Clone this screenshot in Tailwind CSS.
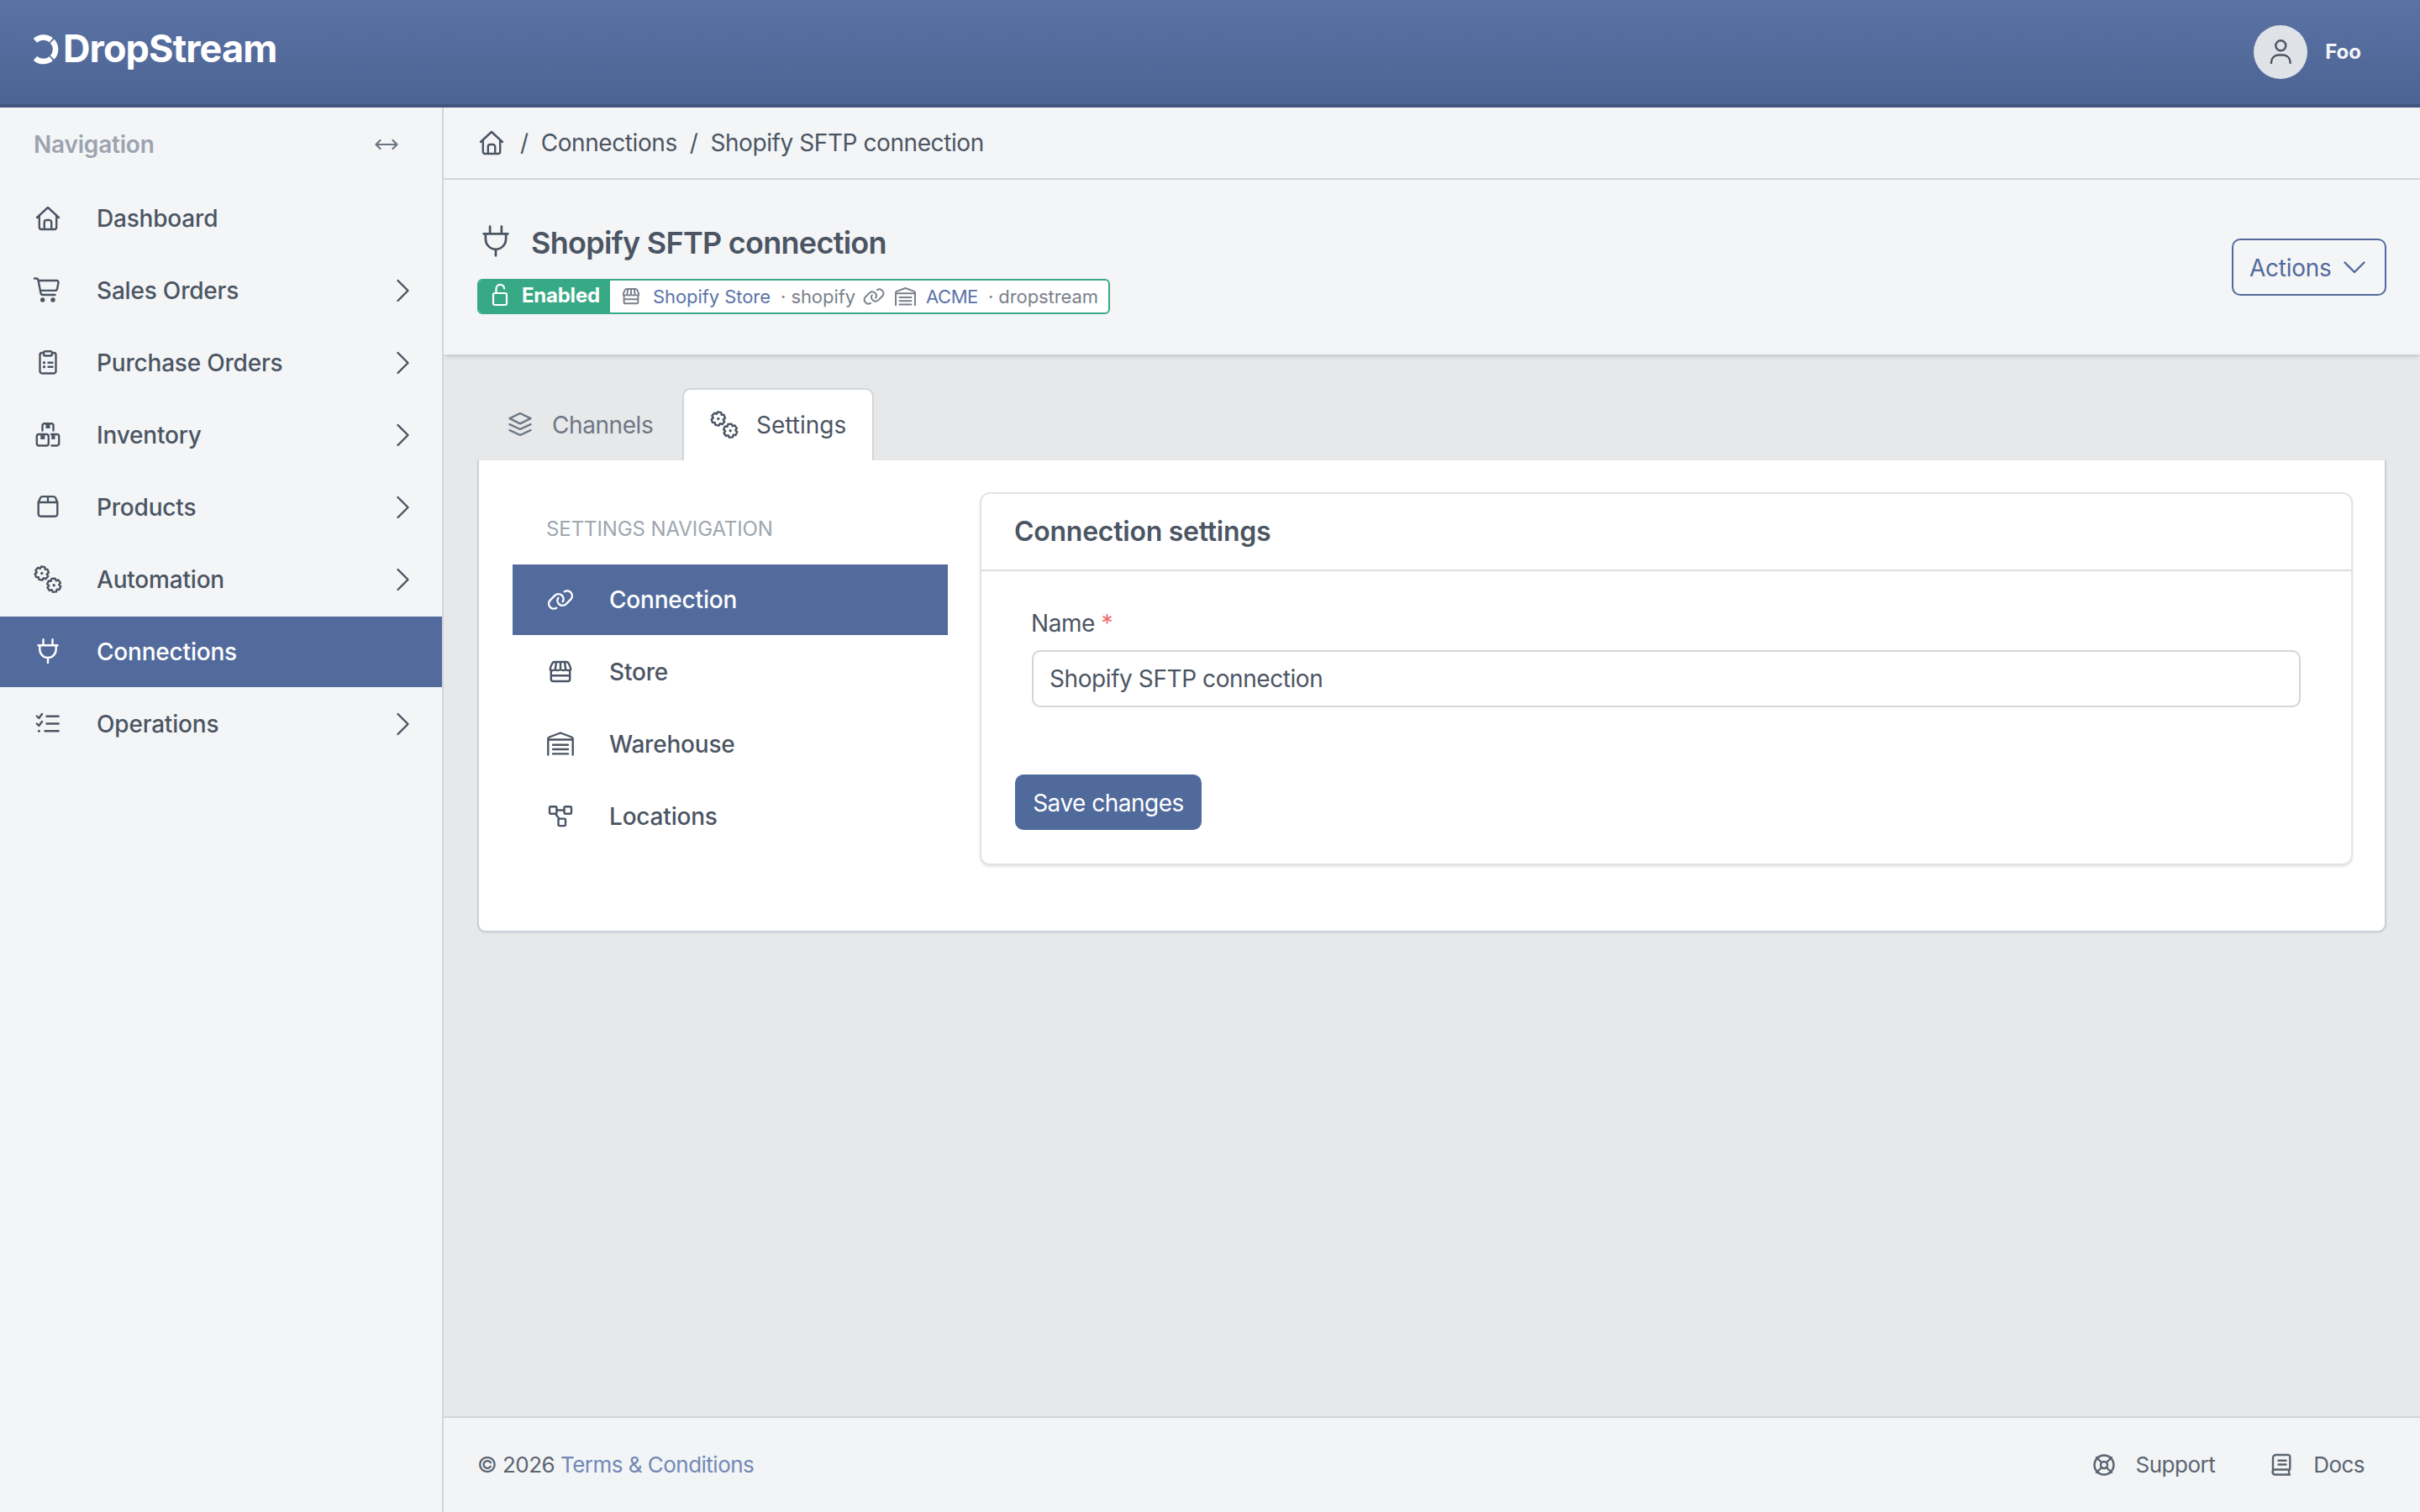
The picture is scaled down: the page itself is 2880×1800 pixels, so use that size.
<!DOCTYPE html>
<html lang="en">
  <head>
    <meta charset="UTF-8" />
    <meta name="viewport" content="width=device-width, initial-scale=1.0" />
    <title>Shopify SFTP connection | DropStream</title>
    <script src="https://cdn.jsdelivr.net/npm/@tailwindcss/browser@4"></script>
  </head>
  <body class="flex h-screen flex-col overflow-hidden bg-[#e6e8ea] font-['Inter','Liberation_Sans',sans-serif] text-[28px] leading-[42px] tracking-[-0.015em] text-[#4b5563] [stroke-linecap:round] [stroke-linejoin:round]">
    <!-- icon sprite -->
    <svg class="hidden">
      <symbol id="home" viewBox="0 0 32 32">
        <path d="M3 15 16 3l13 12M5.8 13v13.5a2.5 2.5 0 0 0 2.5 2.5h15.4a2.5 2.5 0 0 0 2.5-2.5V13" />
        <path d="M11.8 28.5v-8a2.5 2.5 0 0 1 2.5-2.5h3.4a2.5 2.5 0 0 1 2.5 2.5v8" />
      </symbol>
      <symbol id="cart" viewBox="0 0 32 32" overflow="visible">
        <path d="M0 1.5h2a2.5 2.5 0 0 1 2.5 2l3 15.5a2.5 2.5 0 0 0 2.5 2h14.5M4.5 4h22a2 2 0 0 1 2 2.4l-1.5 7.5a2.5 2.5 0 0 1-2.5 2H6.8" />
        <path d="M9.7 27h.01M22 27h.01" stroke-width="5.4" />
      </symbol>
      <symbol id="clipboard" viewBox="0 0 32 32">
        <path d="M10.5 4H9a2.5 2.5 0 0 0-2.5 2.5V26a2.5 2.5 0 0 0 2.5 2.5h14a2.5 2.5 0 0 0 2.5-2.5V6.5A2.5 2.5 0 0 0 23 4h-1.5" />
        <path d="M13 2.2h6a2 2 0 0 1 2 2v1.3a2 2 0 0 1-2 2h-6a2 2 0 0 1-2-2V4.2a2 2 0 0 1 2-2ZM16.5 15.7h5M16.5 20.7h5" />
        <path d="M11.5 15.7h.01M11.5 20.7h.01" stroke-width="3.4" />
      </symbol>
      <symbol id="boxes" viewBox="0 0 32 32">
        <path d="M9.500 10.500V4.500a2.300 2.300 0 0 1 2.300-2.300h8.400a2.300 2.300 0 0 1 2.300 2.300v6" />
        <rect x="2.8" y="15" width="14" height="13.5" rx="2.5" />
        <path d="M20 15h6.700a2.500 2.500 0 0 1 2.500 2.500V26a2.500 2.500 0 0 1-2.500 2.500H20.500" />
        <path d="M13.500 2h5v6h-5zM7.300 15h5v6h-5zM20.300 15h4.200v6h-4.200z" fill="currentColor" stroke="none" />
      </symbol>
      <symbol id="box" viewBox="0 0 32 32">
        <path d="M4.700 9.800 7 4.800a3 3 0 0 1 2.700-1.700h12.600A3 3 0 0 1 25 4.800l2.300 5V24a2.700 2.700 0 0 1-2.700 2.700H7.400A2.700 2.700 0 0 1 4.700 24ZM4.700 10h22.600M16 3.200V10" />
      </symbol>
      <symbol id="gears" viewBox="0 0 32 32" overflow="visible">
        <g transform="translate(8.8 8.5) rotate(-20)">
          <path d="M7.900-2.100V2.100L5.200 3 5.800 5.800 2.100 7.900 0 6-2.100 7.900-5.800 5.800-5.200 3-7.900 2.100V-2.100L-5.200-3-5.800-5.800-2.100-7.900 0-6 2.100-7.900 5.800-5.800 5.200-3Z" />
          <path d="M0 0h.01" stroke-width="3.4" />
        </g>
        <g transform="translate(23.2 22.7) rotate(25)">
          <path d="M7.900-2.100V2.100L5.200 3 5.800 5.800 2.100 7.900 0 6-2.100 7.900-5.800 5.800-5.200 3-7.900 2.100V-2.100L-5.200-3-5.800-5.800-2.100-7.900 0-6 2.100-7.900 5.800-5.800 5.200-3Z" />
          <path d="M0 0h.01" stroke-width="3.4" />
        </g>
      </symbol>
      <symbol id="plug" viewBox="0 0 32 32">
        <path d="M10.500 1.200V8M21.500 1.200V8M4.500 8.200h23M6.300 8.200V13a9.700 10 0 0 0 19.400 0V8.200M16 23v6" />
      </symbol>
      <symbol id="tasks" viewBox="0 0 32 32">
        <path d="m2.800 6.500 2.500 2.500 3.700-5M2.800 15.500 5.300 18l3.700-5M14.500 6.700h14.200M14.500 15.500h14.200M12.500 24.300h16.200" />
        <path d="M5.400 24.300h.01" stroke-width="3" />
      </symbol>
      <symbol id="chevron-right" viewBox="0 0 32 32">
        <path d="m11.500 4 12 12-12 12" />
      </symbol>
      <symbol id="chevron-down" viewBox="0 0 32 32">
        <path d="m4.500 10.500 11.500 11.500 11.500-11.500" />
      </symbol>
      <symbol id="arrows-h" viewBox="0 0 32 32">
        <path d="M3.500 16h25M8.500 11l-5 5 5 5M23.500 11l5 5-5 5" />
      </symbol>
      <symbol id="store" viewBox="0 0 32 32">
        <path d="M9 4h14a3 3 0 0 1 2.700 1.700c1.300 2.600 2.600 4.900 2.600 7.300-1.300 1.500-4.700 1.500-6.100 0-1.400 1.500-4.700 1.500-6.200 0-1.500 1.500-4.800 1.500-6.200 0-1.400 1.500-4.800 1.500-6.100 0 0-2.400 1.300-4.700 2.600-7.300A3 3 0 0 1 9 4ZM11 4l-1.200 9M16 4v9M21 4l1.200 9" />
        <path d="M4.800 14v10.500A2.500 2.500 0 0 0 7.300 27h17.400a2.500 2.500 0 0 0 2.500-2.500V14M4.800 20.200h22.400" />
      </symbol>
      <symbol id="warehouse" viewBox="0 0 32 32">
        <path d="M1.300 28.500V9.500q0-1.500 1.300-2L16 2.500l13.400 5q1.300.5 1.300 2v19M1.500 10.500h29M7 16.700h18M7 22h18M7 27.400h18" />
      </symbol>
      <symbol id="link" viewBox="0 0 32 32">
        <path d="M20.800 6.300A6 6 0 0 1 28.400 15.400L22.400 21.400A6 6 0 0 1 13.300 13.800M11.200 25.700A6 6 0 0 1 3.600 16.600L9.600 10.600A6 6 0 0 1 18.700 18.200" />
      </symbol>
      <symbol id="nodes" viewBox="0 0 32 32">
        <rect x="3" y="4.2" width="8.5" height="8.5" rx="1.5" />
        <rect x="20.500" y="4.200" width="8.500" height="8.500" rx="1.500" />
        <rect x="13.500" y="18.600" width="8.500" height="8.500" rx="1.500" />
        <path d="M11.500 8.500h9M10 12.700l4.500 6" />
      </symbol>
      <symbol id="layers" viewBox="0 0 32 32">
        <path d="m16 3 12.500 6.200L16 15.300 3.500 9.200ZM3.500 16.200 16 22l12.500-5.800M3.500 23.200 16 29l12.500-5.800" />
      </symbol>
      <symbol id="user" viewBox="0 0 32 32">
        <circle cx="16.3" cy="8.3" r="6" />
        <path d="M5 29v-1a8.500 8.500 0 0 1 8.500-8.500h5.600a8.500 8.500 0 0 1 8.500 8.500v1" />
      </symbol>
      <symbol id="unlock" viewBox="0 0 20 28">
        <rect x="2" y="12" width="16" height="14" rx="2" />
        <path d="M5.500 12V7a4.800 4.800 0 0 1 9.600-.5" />
      </symbol>
      <symbol id="life-ring" viewBox="0 0 32 32">
        <circle cx="16" cy="16" r="11.5" />
        <circle cx="16" cy="16" r="4" />
        <path d="m7 7 6 6M25 7l-6 6M7 25l6-6M25 25l-6-6" />
      </symbol>
      <symbol id="book" viewBox="0 0 32 32">
        <path d="M26 21.500H8.500a3 3 0 0 0 0 6h17.500M6 25V7.500a3.500 3.500 0 0 1 3.500-3.500H24a2.300 2.300 0 0 1 2.300 2.300v13.500a2.300 2.300 0 0 1-1.300 2.200v5.500M12.500 10.700h9M12.500 15.500h9" />
      </symbol>
    </svg>

    <!-- header -->
    <header class="flex h-32 shrink-0 items-center justify-between border-b-4 border-[#40557f] bg-linear-to-b from-[#5b73a4] to-[#4c6494] pr-[70px] pl-10 text-white">
      <a class="flex items-center gap-[5px]">
        <svg class="-mt-[7px] h-9 w-[30px] fill-none stroke-white stroke-[6.500] [stroke-linecap:butt]" viewBox="0 0 30 36">
          <path d="M2 7.300A14.300 14.300 0 0 1 20.900 6.800M22.200 8A14.300 14.300 0 0 1 22.200 27.600M20.900 28.800A14.300 14.300 0 0 1 2 28.300" />
        </svg>
        <span class="-mt-2 text-[45px] font-bold tracking-[-0.02em]">DropStream</span>
      </a>
      <div class="flex items-center gap-[21px]">
        <span class="flex size-16 items-center justify-center rounded-full bg-[#dfe2e7] text-[#4b5563]">
          <svg class="size-8 fill-none stroke-current stroke-[2.4]"><use href="#user" /></svg>
        </span>
        <span class="text-[24px] font-bold tracking-normal text-[#f4f5f7]">Foo</span>
      </div>
    </header>

    <div class="flex min-h-0 flex-1">
      <!-- sidebar -->
      <aside class="w-[528px] shrink-0 border-r-2 border-[#d1d5db] bg-[#f4f5f7] font-medium tracking-[-0.007em]">
        <div class="flex h-[90px] items-center justify-between pr-[50px] pb-0.5 pl-10 font-semibold text-[#9ca3af]">
          <span>Navigation</span>
          <svg class="size-8 fill-none stroke-[#6b7280] stroke-[2.2]"><use href="#arrows-h" /></svg>
        </div>
        <nav class="flex flex-col gap-0.5">
          <a class="flex h-[84px] items-center pr-8 pl-[41px]">
            <svg class="size-8 fill-none stroke-current stroke-[2.4]"><use href="#home" /></svg>
            <span class="ml-[42px] flex-1">Dashboard</span>
          </a>
          <a class="flex h-[84px] items-center pr-8 pl-[41px]">
            <svg class="size-8 overflow-visible fill-none stroke-current stroke-[2.4]"><use href="#cart" /></svg>
            <span class="ml-[42px] flex-1">Sales Orders</span>
            <svg class="size-8 fill-none stroke-current stroke-[2.4]"><use href="#chevron-right" /></svg>
          </a>
          <a class="flex h-[84px] items-center pr-8 pl-[41px]">
            <svg class="size-8 fill-none stroke-current stroke-[2.4]"><use href="#clipboard" /></svg>
            <span class="ml-[42px] flex-1">Purchase Orders</span>
            <svg class="size-8 fill-none stroke-current stroke-[2.4]"><use href="#chevron-right" /></svg>
          </a>
          <a class="flex h-[84px] items-center pr-8 pl-[41px]">
            <svg class="size-8 fill-none stroke-current stroke-[2.4]"><use href="#boxes" /></svg>
            <span class="ml-[42px] flex-1">Inventory</span>
            <svg class="size-8 fill-none stroke-current stroke-[2.4]"><use href="#chevron-right" /></svg>
          </a>
          <a class="flex h-[84px] items-center pr-8 pl-[41px]">
            <svg class="size-8 fill-none stroke-current stroke-[2.4]"><use href="#box" /></svg>
            <span class="ml-[42px] flex-1">Products</span>
            <svg class="size-8 fill-none stroke-current stroke-[2.4]"><use href="#chevron-right" /></svg>
          </a>
          <a class="flex h-[84px] items-center pr-8 pl-[41px]">
            <svg class="size-8 overflow-visible fill-none stroke-current stroke-[2.4]"><use href="#gears" /></svg>
            <span class="ml-[42px] flex-1">Automation</span>
            <svg class="size-8 fill-none stroke-current stroke-[2.4]"><use href="#chevron-right" /></svg>
          </a>
          <a class="flex h-[84px] items-center bg-[#526b9c] pr-8 pl-[41px] text-white">
            <svg class="size-8 fill-none stroke-current stroke-[2.4]"><use href="#plug" /></svg>
            <span class="ml-[42px] flex-1">Connections</span>
          </a>
          <a class="flex h-[84px] items-center pr-8 pl-[41px]">
            <svg class="size-8 fill-none stroke-current stroke-[2.4]"><use href="#tasks" /></svg>
            <span class="ml-[42px] flex-1">Operations</span>
            <svg class="size-8 fill-none stroke-current stroke-[2.4]"><use href="#chevron-right" /></svg>
          </a>
        </nav>
      </aside>

      <main class="flex min-w-0 flex-1 flex-col overflow-hidden">
        <!-- breadcrumb -->
        <div class="flex h-[86px] shrink-0 items-center border-b-2 border-[#d1d5db] bg-[#f4f5f7] pl-[41px]">
          <svg class="size-8 fill-none stroke-current stroke-[2.4]"><use href="#home" /></svg>
          <span class="ml-[18px]">/</span>
          <a class="ml-[15px]">Connections</a>
          <span class="ml-[15px]">/</span>
          <span class="ml-[15px]">Shopify SFTP connection</span>
        </div>

        <!-- page title -->
        <div class="flex h-[208px] shrink-0 items-center justify-between bg-[#f4f5f7] px-10 shadow-[0_4px_6px_-1px_rgba(0,0,0,0.1),0_2px_4px_-1px_rgba(0,0,0,0.08)]">
          <div class="pt-[3px]">
            <h1 class="flex h-12 items-center text-[36px] font-semibold tracking-[-0.02em]">
              <svg class="-mt-0.5 ml-[2px] size-10 fill-none stroke-current stroke-[2.2]"><use href="#plug" /></svg>
              <span class="ml-[22px]">Shopify SFTP connection</span>
            </h1>
            <div class="mt-[19px] flex h-[42px] w-max items-center overflow-hidden rounded-md border-2 border-[#38a985] bg-white text-[22px] tracking-[-0.003em] text-[#7a818c]">
              <span class="flex h-full w-[156px] items-center bg-[#38a985] pl-[15px] text-[24px] font-bold tracking-[-0.01em] text-white">
                <svg class="-mt-1 h-7 w-5 fill-none stroke-current stroke-[2.2]"><use href="#unlock" /></svg>
                <span class="-mt-0.5 ml-4">Enabled</span>
              </span>
              <svg class="ml-[13px] size-6 fill-none stroke-current stroke-[2.6]"><use href="#store" /></svg>
              <a class="ml-[14px] text-[#5b73a8]">Shopify Store</a>
              <span class="ml-3">· shopify</span>
              <svg class="ml-[9px] size-[26px] fill-none stroke-current stroke-[2.4]"><use href="#link" /></svg>
              <svg class="ml-3 size-[25px] fill-none stroke-current stroke-[2.6]"><use href="#warehouse" /></svg>
              <a class="ml-[12px] tracking-[-0.02em] text-[#5b73a8]">ACME</a>
              <span class="mr-3 ml-3">· dropstream</span>
            </div>
          </div>
          <button class="flex h-[68px] w-[184px] items-center rounded-[10px] border-2 border-[#506a9c] pt-0.5 pl-[19px] text-[#506a9c]">
            <span class="tracking-[-0.01em]">Actions</span>
            <svg class="-mt-0.5 ml-3 size-8 fill-none stroke-current stroke-[2.4]"><use href="#chevron-down" /></svg>
          </button>
        </div>

        <div class="flex-1 px-10 pt-10">
          <!-- tabs -->
          <div class="flex h-[86px]">
            <a class="flex w-[244px] items-center pl-[35px] text-[#6f7783]">
              <svg class="size-8 fill-none stroke-current stroke-[2.4]"><use href="#layers" /></svg>
              <span class="mt-0.5 ml-[22px]">Channels</span>
            </a>
            <a class="flex w-[228px] items-center rounded-t-[10px] border-2 border-b-0 border-[#d1d5db] bg-white pl-8">
              <svg class="size-8 overflow-visible fill-none stroke-current stroke-[2.4]"><use href="#gears" /></svg>
              <span class="ml-[22px] tracking-normal">Settings</span>
            </a>
          </div>

          <!-- tab panel -->
          <div class="flex h-[562px] gap-[38px] rounded-b-[10px] border-2 border-t-0 border-[#cbcfd7] bg-white pr-[38px] pl-10 shadow-[0_1px_2px_rgba(0,0,0,0.08)]">
            <div class="w-[518px] shrink-0 pt-[61px] font-medium tracking-[-0.007em]">
              <h2 class="mb-[21px] pl-10 text-[24px] font-normal tracking-[-0.004em] text-[#a0a6ae]">SETTINGS NAVIGATION</h2>
              <nav class="flex flex-col gap-0.5">
                <a class="flex h-[84px] items-center bg-[#526b9c] pl-[41px] text-white">
                  <svg class="size-8 fill-none stroke-current stroke-[2.4]"><use href="#link" /></svg>
                  <span class="ml-[42px]">Connection</span>
                </a>
                <a class="flex h-[84px] items-center pl-[41px]">
                  <svg class="size-8 fill-none stroke-current stroke-[2.4]"><use href="#store" /></svg>
                  <span class="ml-[42px]">Store</span>
                </a>
                <a class="flex h-[84px] items-center pl-[41px]">
                  <svg class="size-8 fill-none stroke-current stroke-[2.4]"><use href="#warehouse" /></svg>
                  <span class="ml-[42px]">Warehouse</span>
                </a>
                <a class="flex h-[84px] items-center pl-[41px]">
                  <svg class="size-8 fill-none stroke-current stroke-[2.4]"><use href="#nodes" /></svg>
                  <span class="ml-[42px]">Locations</span>
                </a>
              </nav>
            </div>

            <!-- settings form -->
            <form class="mt-[38px] h-[444px] flex-1 rounded-xl border-2 border-[#e2e4e7] bg-white shadow-[0_2px_3px_rgba(0,0,0,0.1)]">
              <h3 class="flex h-[92px] items-center border-b-2 border-[#dcdee1] pl-[39px] text-[32px] font-semibold tracking-[-0.008em]">Connection settings</h3>
              <div class="pt-[41px] pr-[60px] pl-[60px]">
                <label class="-ml-px">Name <span class="text-[#ef7171]">*</span></label>
                <input class="mt-[11px] block h-[68px] w-full rounded-[10px] border-2 border-[#d1d5db] px-[19px]" value="Shopify SFTP connection" />
              </div>
              <button type="button" class="mt-20 ml-10 h-[66px] w-[222px] rounded-[10px] bg-[#506a9c] pt-0.5 tracking-[-0.018em] text-white">Save changes</button>
            </form>
          </div>
        </div>

        <!-- footer -->
        <footer class="flex h-[114px] shrink-0 items-center justify-between border-t-2 border-[#d1d5db] bg-[#f2f4f6] pr-[66px] pl-10 text-[26px] tracking-[-0.02em] text-[#5c6470]">
          <p>© 2026 <a class="text-[#7288b6]">Terms &amp; Conditions</a></p>
          <div class="flex items-center">
            <svg class="size-8 fill-none stroke-current stroke-[2.4]"><use href="#life-ring" /></svg>
            <span class="ml-[22px]">Support</span>
            <svg class="ml-[63px] size-8 fill-none stroke-current stroke-[2.4]"><use href="#book" /></svg>
            <span class="ml-[22px]">Docs</span>
          </div>
        </footer>
      </main>
    </div>
  </body>
</html>
